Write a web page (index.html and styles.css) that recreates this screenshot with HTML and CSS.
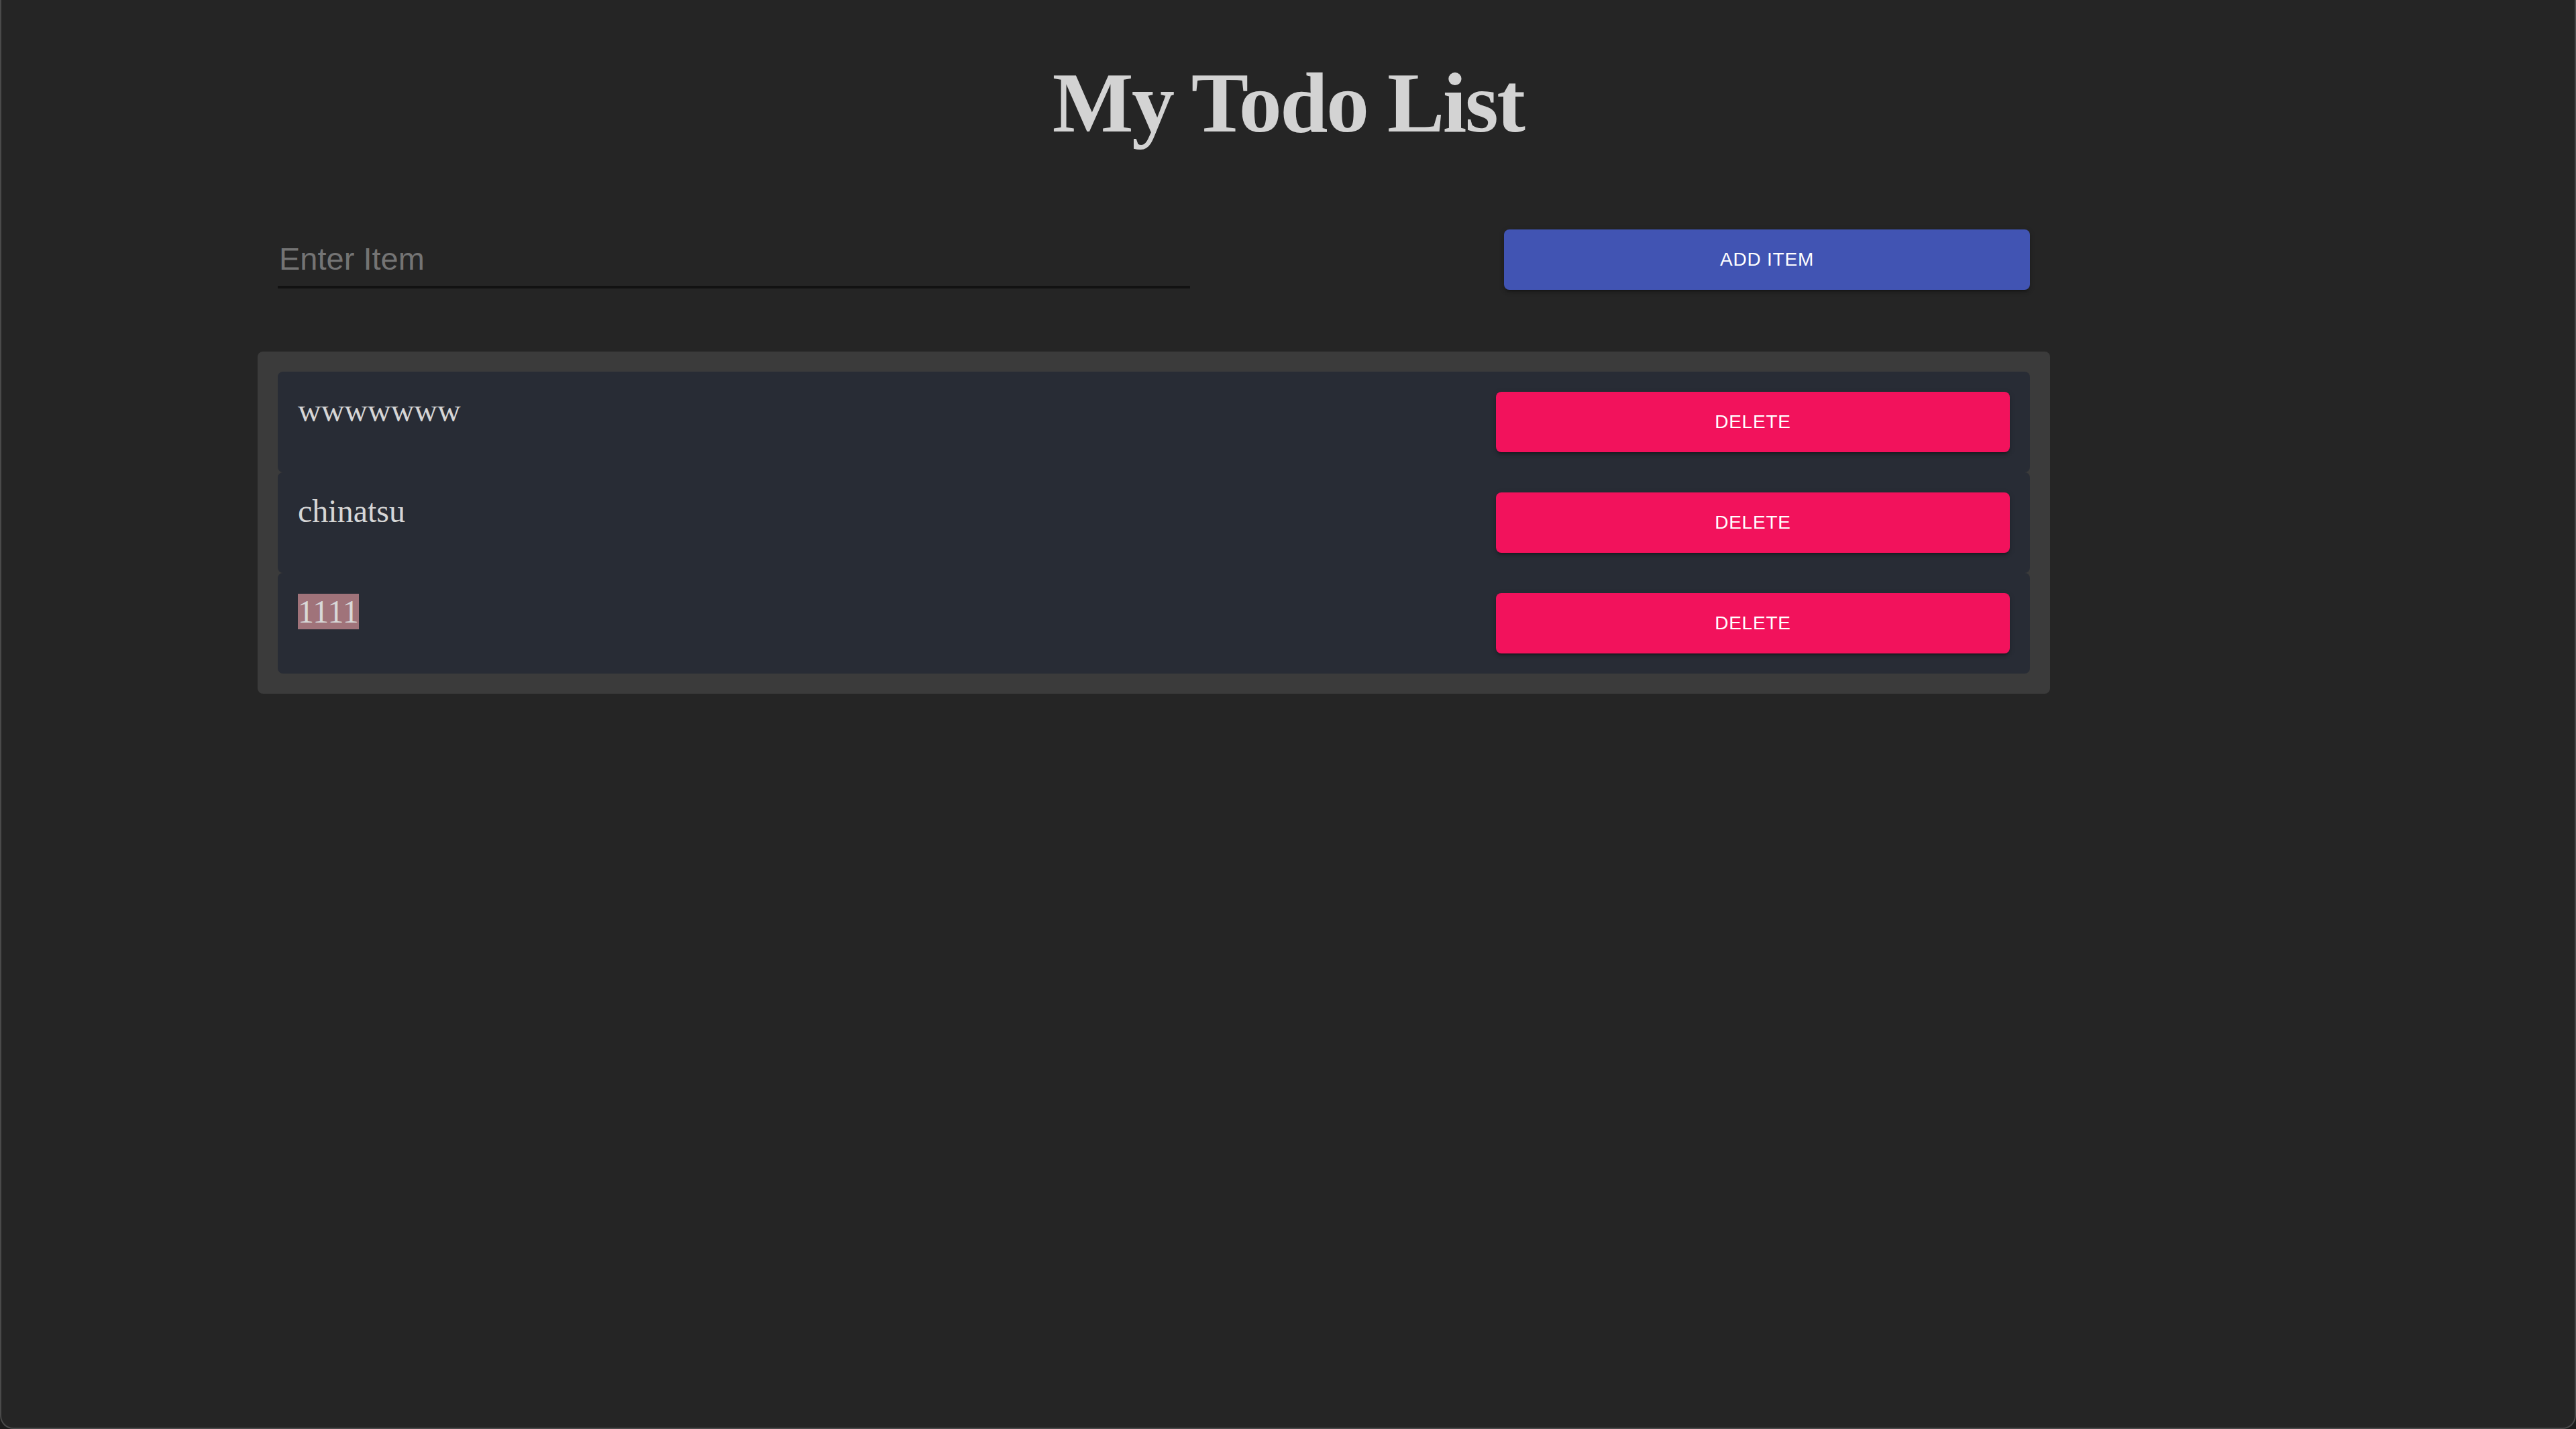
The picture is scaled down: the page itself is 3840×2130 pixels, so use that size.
FILE: index.html
```html
<!DOCTYPE html>
<html lang="en">
<head>
<meta charset="utf-8">
<title>My Todo List</title>
<link rel="stylesheet" href="styles.css">
</head>
<body>
<div class="window">
  <h1 class="title">My Todo List</h1>
  <div class="form-row">
    <input class="item-input" type="text" placeholder="Enter Item">
    <button class="btn btn-add">ADD ITEM</button>
  </div>
  <div class="list">
    <div class="todo">
      <span class="todo-text">wwwwwww</span>
      <button class="btn btn-delete">DELETE</button>
    </div>
    <div class="todo">
      <span class="todo-text">chinatsu</span>
      <button class="btn btn-delete">DELETE</button>
    </div>
    <div class="todo">
      <span class="todo-text"><span class="selected">1111</span></span>
      <button class="btn btn-delete">DELETE</button>
    </div>
  </div>
</div>
</body>
</html>
```

FILE: styles.css
```css
html {
  background: #1c1c1c;
}
body {
  margin: 0;
}
.window {
  box-sizing: border-box;
  height: 2130px;
  background: #252525;
  border-left: 2px solid #4a4a4a;
  border-right: 2px solid #4a4a4a;
  border-bottom: 2px solid #4a4a4a;
  border-radius: 0 0 20px 20px;
  overflow: hidden;
}
.title {
  margin: 0;
  padding-top: 79px;
  font-family: "Liberation Serif", "Times New Roman", serif;
  font-weight: bold;
  font-size: 128px;
  line-height: 148px;
  letter-spacing: -2.5px;
  color: #d3d3d3;
  text-align: center;
}
.form-row {
  display: flex;
  justify-content: space-between;
  align-items: flex-start;
  margin: 115px 0 0 412px;
  width: 2612px;
}
.item-input {
  box-sizing: content-box;
  width: 1358px;
  height: 56px;
  margin-top: 16px;
  padding: 0 0 12px 2px;
  border: none;
  border-bottom: 4px solid #121212;
  background: transparent;
  outline: none;
  font-family: "Liberation Sans", Arial, sans-serif;
  font-size: 47px;
  line-height: 56px;
  color: #d3d3d3;
}
.item-input::placeholder {
  color: #747474;
}
.btn {
  border: none;
  border-radius: 8px;
  height: 90px;
  padding: 0;
  font-family: "Liberation Sans", Arial, sans-serif;
  font-size: 28px;
  letter-spacing: 0.8px;
  color: #ffffff;
  box-shadow: 0 6px 2px -4px rgba(0,0,0,0.2), 0 4px 4px 0 rgba(0,0,0,0.14), 0 2px 10px 0 rgba(0,0,0,0.12);
  cursor: pointer;
}
.btn-add {
  width: 784px;
  background: #4154b3;
}
.btn-delete {
  width: 766px;
  background: #f2125c;
}
.list {
  box-sizing: border-box;
  margin: 92px 0 0 382px;
  width: 2672px;
  padding: 30px;
  background: #3b3b3b;
  border-radius: 8px;
}
.todo {
  box-sizing: border-box;
  height: 150px;
  padding: 30px;
  display: flex;
  justify-content: space-between;
  align-items: flex-start;
  background: #282c35;
  border-radius: 8px;
}
.todo-text {
  font-family: "Liberation Serif", "Times New Roman", serif;
  font-size: 48px;
  line-height: 56px;
  color: #d6d6d6;
}
.selected {
  background: #a0737a;
  color: #d8d8d8;
}
```
